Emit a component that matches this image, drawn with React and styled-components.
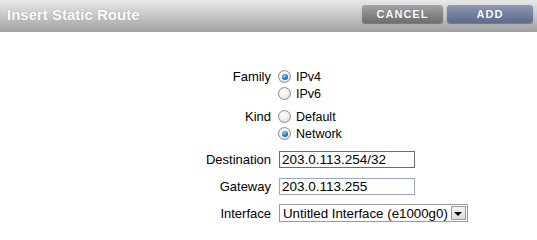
import React from "react";
import styled, { createGlobalStyle } from "styled-components";

const Global = createGlobalStyle`
  html, body { margin: 0; padding: 0; background: #fff; }
  body { font-family: "Liberation Sans", Arial, sans-serif; font-size: 12.5px; color: #000; }
`;

const Page = styled.div`
  width: 537px;
  height: 240px;
  background: #fff;
`;

const Header = styled.div`
  height: 32px;
  display: flex;
  align-items: center;
  justify-content: space-between;
  padding: 0 4px 0 7px;
  box-sizing: border-box;
  background: linear-gradient(to bottom, #e8e8e8 0%, #cacaca 45%, #a0a0a0 100%);
`;

const Title = styled.h1`
  margin: 0 0 3px 0;
  font-family: "Liberation Sans", Arial, sans-serif;
  font-weight: bold;
  font-size: 15px;
  color: #fff;
  text-shadow: 0 0 1px rgba(90, 90, 90, 0.6);
`;

const Buttons = styled.div`
  display: flex;
  gap: 4px;
  margin-bottom: 5px;
`;

const Button = styled.button`
  width: ${(p) => (p.$primary ? "86px" : "81px")};
  height: 18px;
  border: none;
  border-radius: 3px;
  padding: 0;
  font-family: "Liberation Sans", Arial, sans-serif;
  font-weight: bold;
  font-size: 11px;
  letter-spacing: 1px;
  color: #fff;
  text-shadow: 0 0 1px rgba(40, 40, 40, 0.5);
  box-shadow: 0 1px 1px rgba(0, 0, 0, 0.35);
  background: ${(p) =>
    p.$primary
      ? "linear-gradient(to bottom, #909bb4 0%, #707d9d 55%, #5f6b89 100%)"
      : "linear-gradient(to bottom, #a6a6a6 0%, #858585 55%, #6e6e6e 100%)"};
`;

const Form = styled.div`
  padding-top: 36px;
  display: flex;
  flex-direction: column;
`;

const Row = styled.div`
  display: flex;
  align-items: ${(p) => (p.$top ? "flex-start" : "center")};
  margin-top: ${(p) => p.$gap || 0}px;
`;

const Label = styled.div`
  width: 271px;
  padding-right: 8px;
  flex-shrink: 0;
  text-align: right;
  font-size: 13px;
  line-height: ${(p) => (p.$top ? "17px" : "normal")};
`;

const Options = styled.div`
  display: flex;
  flex-direction: column;
`;

const Option = styled.label`
  display: flex;
  align-items: center;
  height: 17px;
  gap: 5px;
  margin-left: -1px;
`;

const Radio = styled.span`
  width: 11px;
  height: 11px;
  border-radius: 50%;
  border: 1px solid #8a8a8a;
  background: radial-gradient(circle at 40% 35%, #ffffff 0%, #f0f0f0 50%, #d0d0d0 100%);
  display: flex;
  align-items: center;
  justify-content: center;
  &::after {
    content: "";
    display: ${(p) => (p.$checked ? "block" : "none")};
    width: 6px;
    height: 6px;
    border-radius: 50%;
    background: radial-gradient(circle at 40% 35%, #8ad0f6 0%, #1f7fc4 50%, #0b4f86 100%);
  }
`;

const Input = styled.div`
  width: 130px;
  height: 15px;
  border: 1px solid ${(p) => (p.$focused ? "#6b6b6b" : "#9aa9c4")};
  padding: 0 2px;
  display: flex;
  align-items: center;
  line-height: 15px;
  font-size: 13.5px;
`;

const Select = styled.div`
  display: flex;
  align-items: center;
  height: 16px;
  border: 1px solid #9a9a9a;
  padding: 0 1px 0 3px;
  gap: 3px;
  font-size: 13.3px;
`;

const Arrow = styled.span`
  width: 15px;
  height: 14px;
  border: 1px solid #9a9a9a;
  box-sizing: border-box;
  background: linear-gradient(to bottom, #f4f4f4, #dcdcdc);
  display: flex;
  align-items: center;
  justify-content: center;
  &::after {
    content: "";
    border-left: 4px solid transparent;
    border-right: 4px solid transparent;
    border-top: 4px solid #000;
    margin-top: 1px;
  }
`;

export default function App() {
  return (
    <Page>
      <Global />
      <Header>
        <Title>Insert Static Route</Title>
        <Buttons>
          <Button>CANCEL</Button>
          <Button $primary>ADD</Button>
        </Buttons>
      </Header>
      <Form>
        <Row $top>
          <Label $top>Family</Label>
          <Options>
            <Option><Radio $checked />IPv4</Option>
            <Option><Radio />IPv6</Option>
          </Options>
        </Row>
        <Row $top $gap={6}>
          <Label $top>Kind</Label>
          <Options>
            <Option><Radio />Default</Option>
            <Option><Radio $checked />Network</Option>
          </Options>
        </Row>
        <Row $gap={9}>
          <Label>Destination</Label>
          <Input $focused>203.0.113.254/32</Input>
        </Row>
        <Row $gap={10}>
          <Label>Gateway</Label>
          <Input>203.0.113.255</Input>
        </Row>
        <Row $gap={9}>
          <Label>Interface</Label>
          <Select>
            Untitled Interface (e1000g0)
            <Arrow />
          </Select>
        </Row>
      </Form>
    </Page>
  );
}
